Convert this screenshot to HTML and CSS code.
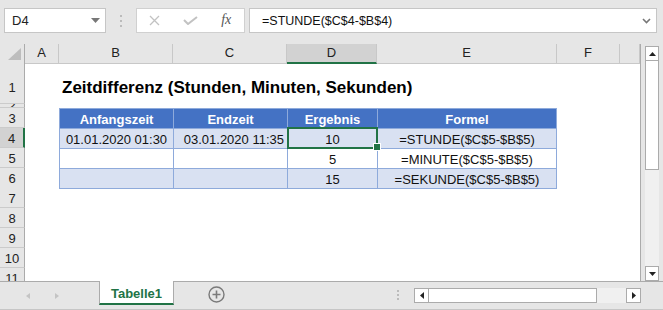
FILE: index.html
```html
<!DOCTYPE html>
<html lang="de">
<head>
    <meta charset="UTF-8">
    <title>Zeitdifferenz</title>
    <link rel="stylesheet" href="styles.css">
</head>
<body>
    <div class="excel">
        <div class="formula-bar">
            <div class="name-box">
                <span>D4</span>
                <svg class="caret" width="9" height="5" viewBox="0 0 9 5"><path d="M0 0H9L4.5 5Z" fill="#777"/></svg>
            </div>
            <div class="grip">
                <svg width="3" height="12" viewBox="0 0 3 12"><rect x="0" y="0" width="2" height="2" fill="#bbb"/><rect x="0" y="5" width="2" height="2" fill="#bbb"/><rect x="0" y="10" width="2" height="2" fill="#bbb"/></svg>
            </div>
            <div class="fx-buttons">
                <div class="fx-slot">
                    <svg width="11" height="11" viewBox="0 0 11 11"><path d="M1 1L10 10M10 1L1 10" stroke="#c2c2c2" stroke-width="1.3"/></svg>
                </div>
                <div class="fx-slot">
                    <svg width="15" height="9" viewBox="0 0 15 9"><path d="M1 4L5 8L14 1" stroke="#c2c2c2" stroke-width="2" fill="none"/></svg>
                </div>
                <div class="fx-slot fx">fx</div>
            </div>
            <div class="formula-input">
                <span>=STUNDE($C$4-$B$4)</span>
                <svg class="chevron" width="9" height="6" viewBox="0 0 9 6"><path d="M1 1L4.5 4.5L8 1" stroke="#777" stroke-width="1.6" fill="none"/></svg>
            </div>
        </div>

        <div class="workspace">
            <div class="sheet">
                <div class="row head">
                    <div class="corner">
                        <svg width="13" height="12" viewBox="0 0 13 12"><path d="M13 0V12H0Z" fill="#bdbdbd"/></svg>
                    </div>
                    <div class="ch">A</div>
                    <div class="ch">B</div>
                    <div class="ch">C</div>
                    <div class="ch sel">D</div>
                    <div class="ch">E</div>
                    <div class="ch">F</div>
                    <div class="ch"></div>
                </div>
                <div class="row r1">
                    <div class="rh">1</div>
                    <div></div>
                    <div class="title">Zeitdifferenz (Stunden, Minuten, Sekunden)</div>
                </div>
                <div class="row r2">
                    <div class="rh"><span>2</span></div>
                </div>
                <div class="row">
                    <div class="rh">3</div>
                    <div></div>
                    <div class="t th">Anfangszeit</div>
                    <div class="t th">Endzeit</div>
                    <div class="t th">Ergebnis</div>
                    <div class="t th last">Formel</div>
                </div>
                <div class="row">
                    <div class="rh sel">4</div>
                    <div></div>
                    <div class="t band">01.01.2020 01:30</div>
                    <div class="t band right">03.01.2020 11:35</div>
                    <div class="t band cur">10</div>
                    <div class="t band last">=STUNDE($C$5-$B$5)</div>
                </div>
                <div class="row">
                    <div class="rh">5</div>
                    <div></div>
                    <div class="t"></div>
                    <div class="t"></div>
                    <div class="t">5</div>
                    <div class="t last">=MINUTE($C$5-$B$5)</div>
                </div>
                <div class="row end">
                    <div class="rh">6</div>
                    <div></div>
                    <div class="t band"></div>
                    <div class="t band"></div>
                    <div class="t band">15</div>
                    <div class="t band last">=SEKUNDE($C$5-$B$5)</div>
                </div>
                <div class="row"><div class="rh">7</div></div>
                <div class="row"><div class="rh">8</div></div>
                <div class="row"><div class="rh">9</div></div>
                <div class="row"><div class="rh">10</div></div>
                <div class="row"><div class="rh">11</div></div>
            </div>

            <div class="vscroll">
                <div class="vtrack">
                    <div class="sbtn">
                        <svg width="7" height="4" viewBox="0 0 7 4"><path d="M0 4H7L3.5 0Z" fill="#222"/></svg>
                    </div>
                    <div class="vthumb"></div>
                    <div class="spacer"></div>
                    <div class="sbtn">
                        <svg width="7" height="4" viewBox="0 0 7 4"><path d="M0 0H7L3.5 4Z" fill="#222"/></svg>
                    </div>
                </div>
            </div>
        </div>

        <div class="tabbar">
            <div class="tab-nav">
                <svg width="4" height="6" viewBox="0 0 4 6"><path d="M4 0V6L0 3Z" fill="#c4c4c4"/></svg>
                <svg width="4" height="6" viewBox="0 0 4 6"><path d="M0 0V6L4 3Z" fill="#c4c4c4"/></svg>
            </div>
            <div class="sheet-tab">Tabelle1</div>
            <div class="add-sheet">
                <svg width="17" height="17" viewBox="0 0 17 17"><circle cx="8.5" cy="8.5" r="7.5" stroke="#7a7a7a" stroke-width="1.4" fill="none"/><path d="M8.5 4.5V12.5M4.5 8.5H12.5" stroke="#7a7a7a" stroke-width="1.6"/></svg>
            </div>
            <div class="spacer"></div>
            <div class="split-dots">
                <svg width="3" height="11" viewBox="0 0 3 11"><rect x="0" y="0" width="2" height="2" fill="#bbb"/><rect x="0" y="4" width="2" height="2" fill="#bbb"/><rect x="0" y="8" width="2" height="2" fill="#bbb"/></svg>
            </div>
            <div class="hscroll">
                <div class="sbtn">
                    <svg width="4" height="7" viewBox="0 0 4 7"><path d="M4 0V7L0 3.5Z" fill="#222"/></svg>
                </div>
                <div class="hthumb"></div>
                <div class="spacer"></div>
                <div class="sbtn">
                    <svg width="4" height="7" viewBox="0 0 4 7"><path d="M0 0V7L4 3.5Z" fill="#222"/></svg>
                </div>
            </div>
        </div>
    </div>
</body>
</html>
```

FILE: styles.css
```css
* {
    box-sizing: border-box;
}

body {
    margin: 0;
    background: #e6e6e6;
    font-family: "Liberation Sans", Arial, sans-serif;
    font-size: 13px;
    color: #222;
    overflow: hidden;
}

.excel {
    width: 663px;
    height: 310px;
    display: flex;
    flex-direction: column;
}

/* formula bar */
.formula-bar {
    height: 44px;
    display: flex;
    align-items: flex-start;
    padding: 8px 0 0 4px;
}

.name-box {
    width: 102px;
    height: 25px;
    background: white;
    border: 1px solid #c6c6c6;
    display: flex;
    align-items: center;
    justify-content: space-between;
    padding: 0 5px 0 7px;
    font-size: 13px;
}

.grip {
    width: 30px;
    height: 25px;
    display: flex;
    align-items: center;
    justify-content: center;
}

.fx-buttons {
    width: 109px;
    height: 25px;
    background: white;
    border: 1px solid #d0d0d0;
    display: flex;
    margin-right: 4px;
}

.fx-slot {
    flex: 1;
    display: flex;
    align-items: center;
    justify-content: center;
}

.fx {
    font-family: "Liberation Serif", serif;
    font-style: italic;
    font-size: 14px;
    color: #555;
    padding-bottom: 2px;
}

.formula-input {
    width: 408px;
    height: 25px;
    background: white;
    border: 1px solid #c6c6c6;
    display: flex;
    align-items: center;
    justify-content: space-between;
    padding: 1px 5px 0 12px;
    font-size: 12.5px;
    color: #111;
}

/* sheet */
.workspace {
    height: 237px;
    display: flex;
}

.sheet {
    width: 641px;
    height: 237px;
    overflow: hidden;
    background: white;
    border-right: 1px solid #ababab;
}

.row {
    display: grid;
    grid-template-columns: 25px 34px 114px 114px 90px 180px 63px 1fr;
    height: 20px;
}

.row.head {
    height: 19px;
    background: #e6e6e6;
}

.row.r1 {
    height: 41px;
}

.row.r2 {
    height: 4px;
    overflow: hidden;
}

.corner {
    border-right: 1px solid #ababab;
    border-bottom: 1px solid #c8c8c8;
    display: flex;
    align-items: flex-end;
    justify-content: flex-end;
    padding: 0 3px 3px 0;
}

.ch {
    border-right: 1px solid #c8c8c8;
    border-bottom: 1px solid #c8c8c8;
    text-align: center;
    line-height: 18px;
    color: #222;
}

.ch.sel {
    background: #d2d2d2;
    border-bottom: 2px solid #217346;
}

.rh {
    background: #e6e6e6;
    border-right: 1px solid #ababab;
    border-bottom: 1px solid #cbcbcb;
    text-align: center;
    padding-top: 2px;
    line-height: 17px;
    color: #222;
}

.r1 .rh {
    padding-top: 16px;
}

.r2 .rh {
    padding-top: 0;
    height: 4px;
    overflow: hidden;
}

.r2 .rh span {
    display: block;
    height: 3px;
    line-height: 4px;
    overflow: hidden;
}

.rh.sel {
    background: #d2d2d2;
    border-right: 2px solid #217346;
}

.title {
    grid-column: 3 / -1;
    padding: 15px 0 0 3px;
    font-size: 17px;
    font-weight: bold;
    line-height: 19px;
    color: #000;
    white-space: nowrap;
}

.t {
    border-left: 1px solid #8eaadb;
    border-top: 1px solid #8eaadb;
    text-align: center;
    padding-top: 3px;
    line-height: 16px;
    white-space: nowrap;
    color: #111;
}

.t.last {
    border-right: 1px solid #8eaadb;
}

.row.end .t {
    border-bottom: 1px solid #8eaadb;
}

.th {
    background: #4472c4;
    color: white;
    font-weight: bold;
}

.band {
    background: #d9e1f2;
}

.right {
    text-align: right;
    padding-right: 3px;
}

.cur {
    position: relative;
}

.cur::after {
    content: "";
    position: absolute;
    top: -2px;
    left: -1px;
    right: -1px;
    bottom: -1px;
    border: 2px solid #217346;
}

.cur::before {
    content: "";
    position: absolute;
    right: -4px;
    bottom: -3px;
    width: 6px;
    height: 6px;
    background: #217346;
    border: 1px solid white;
    z-index: 1;
}

/* scroll bars */
.vscroll {
    flex: 1;
    padding: 2px 4px 0 4px;
    display: flex;
}

.vtrack {
    flex: 1;
    background: #f0f0f0;
    display: flex;
    flex-direction: column;
}

.sbtn {
    width: 15px;
    height: 15px;
    background: white;
    border: 1px solid #ababab;
    display: flex;
    align-items: center;
    justify-content: center;
}

.vtrack .sbtn {
    width: 100%;
}

.vthumb {
    height: 109px;
    background: white;
    border: 1px solid #ababab;
    border-top: none;
}

.spacer {
    flex: 1;
}

/* sheet tabs */
.tabbar {
    height: 29px;
    border-top: 1px solid #ababab;
    border-bottom: 1px solid #c6c6c6;
    display: flex;
    align-items: flex-start;
}

.tab-nav {
    width: 99px;
    height: 24px;
    display: flex;
    align-items: center;
    gap: 25px;
    padding: 3px 0 0 26px;
}

.sheet-tab {
    width: 75px;
    height: 24px;
    margin-top: -1px;
    background: white;
    border-left: 1px solid #ababab;
    border-right: 1px solid #ababab;
    border-bottom: 2px solid #217346;
    text-align: center;
    padding-top: 5px;
    font-size: 13px;
    font-weight: bold;
    color: #217346;
}

.add-sheet {
    margin: 4px 0 0 34px;
    height: 17px;
}

.split-dots {
    margin: 7px 14px 0 0;
}

.hscroll {
    width: 227px;
    height: 15px;
    margin: 6px 22px 0 0;
    background: #f0f0f0;
    display: flex;
}

.hthumb {
    width: 168px;
    background: white;
    border: 1px solid #ababab;
    border-left: none;
}
```
